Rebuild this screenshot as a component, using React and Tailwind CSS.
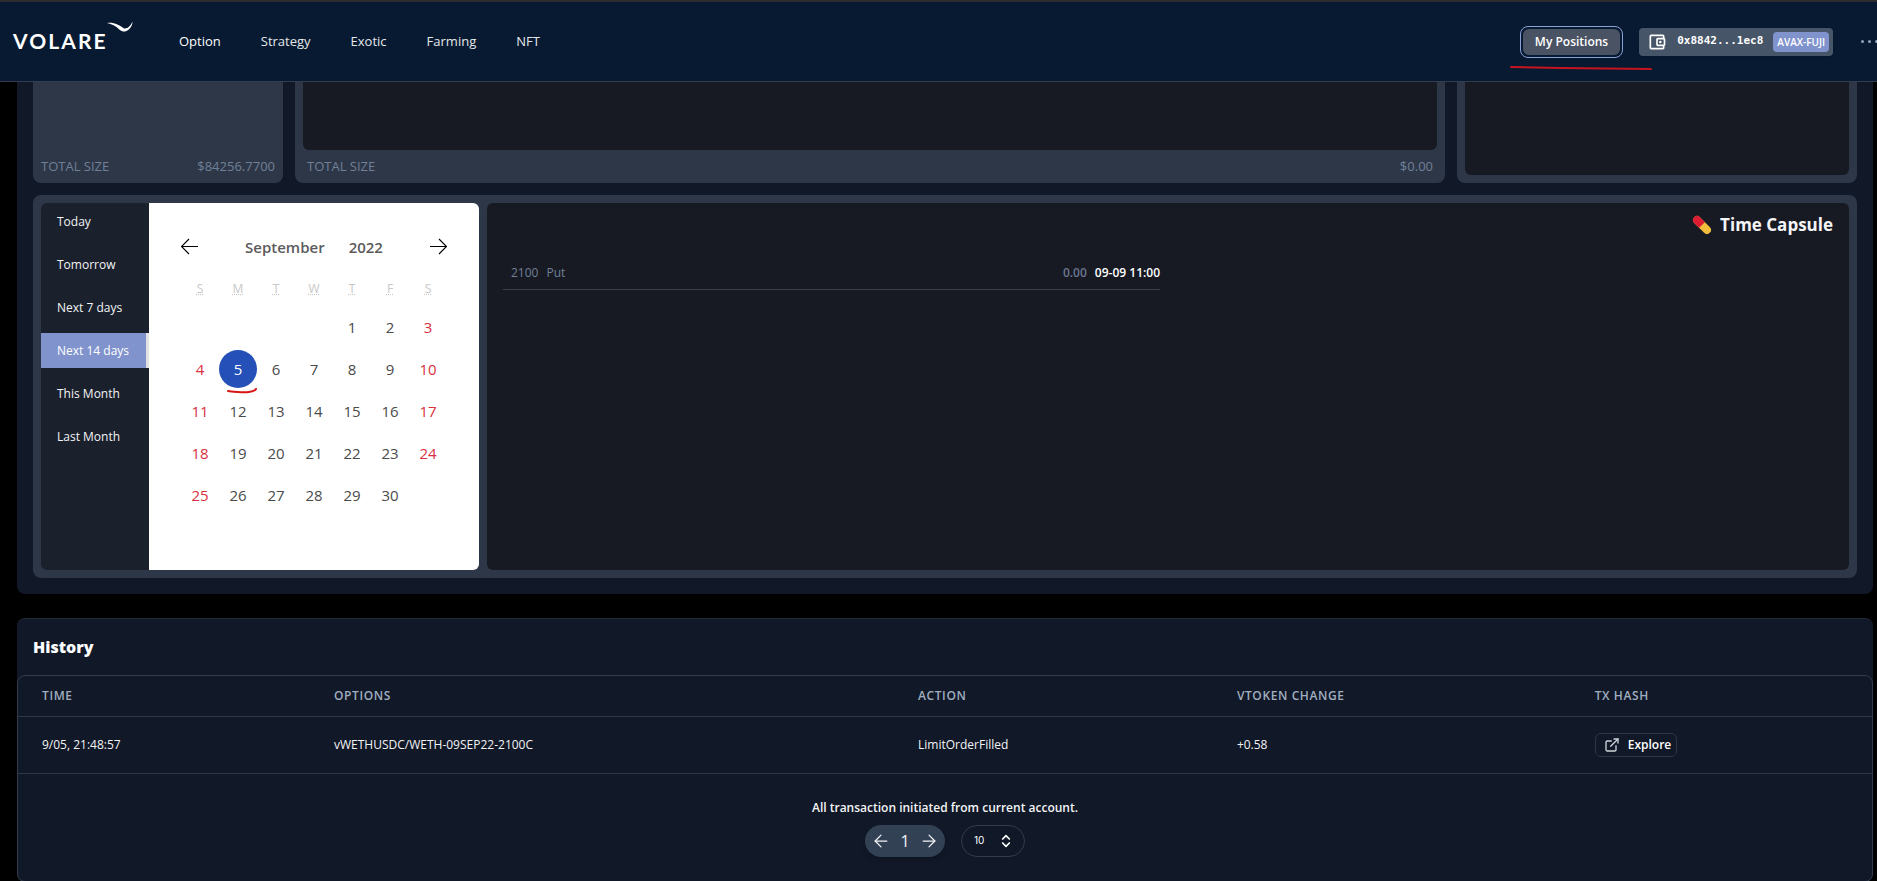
import React, { useState } from 'react';
import { ArrowLeft, ArrowRight, ChevronsUpDown } from 'lucide-react';
import { FiExternalLink } from 'react-icons/fi';
import { MdOutlineAccountBalanceWallet } from 'react-icons/md';

const navLinks = ['Option', 'Strategy', 'Exotic', 'Farming', 'NFT'];
const ranges = ['Today', 'Tomorrow', 'Next 7 days', 'Next 14 days', 'This Month', 'Last Month'];
const weekDays = [
  ['S', 'Sunday'],
  ['M', 'Monday'],
  ['T', 'Tuesday'],
  ['W', 'Wednesday'],
  ['T', 'Thursday'],
  ['F', 'Friday'],
  ['S', 'Saturday'],
];

const history = [
  {
    time: '9/05, 21:48:57',
    option: 'vWETHUSDC/WETH-09SEP22-2100C',
    action: 'LimitOrderFilled',
    change: '+0.58',
  },
];

// September 2022 starts on a Thursday
const weeks = [0, 1, 2, 3, 4].map((w) =>
  [0, 1, 2, 3, 4, 5, 6].map((d) => {
    const day = w * 7 + d - 3;
    return day > 0 && day <= 30 ? day : null;
  })
);

const Logo = () => (
  <a href="#" aria-label="Volare" className="relative block w-32 text-white">
    <span className="font-['Lato'] text-[21px] leading-6 font-bold tracking-widest">VOLARE</span>
    <svg className="absolute -top-2 left-[94px] h-3 w-[26px]" viewBox="0 0 26 12" fill="currentColor">
      <path d="M0 2 C7 1 12 4 17 7.500 C21 8 24 4 25.500 0.500 C25.500 5 22 10 18 10.500 C14 11 12 8 9.500 6 C7 4 4 3 0 2 Z" />
    </svg>
  </a>
);

const Header = () => (
  <header className="relative z-10 flex h-[82px] items-center justify-between overflow-hidden border-t-2 border-b border-t-[#2b2b30] border-b-[#333d4f] bg-[#071a31] pl-[13px]">
    <div className="flex items-center">
      <Logo />
      <nav className="ml-[38px] flex gap-10 text-[13px] text-gray-200">
        {navLinks.map((link) => (
          <a key={link} href="#" className="first:text-white">{link}</a>
        ))}
      </nav>
    </div>
    <div className="flex items-center">
      <div className="relative">
        <button className="block rounded-lg border border-[#8aa0d6] p-0.5">
          <span className="block rounded-md bg-[#4a5364] px-3 py-1 text-xs leading-[18px] font-semibold text-white">My Positions</span>
        </button>
        <svg className="absolute top-10 -left-2.5 h-1 w-[142px]" viewBox="0 0 142 4" fill="none">
          <path d="M1 1 L50 2 L141 3" stroke="#c4141f" strokeWidth="2" strokeLinecap="round" />
        </svg>
      </div>
      <button className="ml-4 flex h-7 items-center rounded bg-[#475569] pr-1 pl-2 text-white shadow">
        <MdOutlineAccountBalanceWallet className="size-5" />
        <span className="mx-2.5 font-['DejaVu_Sans_Mono',monospace] text-[11px] font-bold">0x8842...1ec8</span>
        <span className="rounded bg-[#8093cd] px-1 text-[10px] leading-5 font-semibold">AVAX-FUJI</span>
      </button>
      <button aria-label="More" className="-mr-px ml-7 flex gap-1">
        <i className="size-[3px] rounded-full bg-slate-400" />
        <i className="size-[3px] rounded-full bg-slate-400" />
        <i className="size-[3px] rounded-full bg-slate-400" />
      </button>
    </div>
  </header>
);

const Total = ({ value }) => (
  <div className="flex justify-between text-[13px] leading-[17px] text-[#718096]">
    <span>TOTAL SIZE</span>
    <span>{value}</span>
  </div>
);

const Positions = () => (
  <div className="flex h-[101px] gap-3">
    <div className="flex w-[250px] flex-col justify-end rounded-b-lg bg-[#2d3748] px-2 pb-2">
      <Total value="$84256.7700" />
    </div>
    <div className="flex flex-1 flex-col rounded-b-lg bg-[#2d3748] px-2 pb-2">
      <div className="mb-2 flex-1 rounded-b-md bg-[#171923]" />
      <div className="px-1">
        <Total value="$0.00" />
      </div>
    </div>
    <div className="flex w-[400px] rounded-b-lg bg-[#2d3748] px-2 pb-2">
      <div className="flex-1 rounded-b-md bg-[#171923]" />
    </div>
  </div>
);

const MonthArrow = ({ d }) => (
  <svg className="size-[18px]" viewBox="0 0 18 18" fill="none" stroke="#000" strokeWidth="1.1">
    <path d={d} />
  </svg>
);

const Calendar = () => {
  const [selected, setSelected] = useState(5);

  return (
    <div className="w-[330px] bg-white px-8 pt-7">
      <div className="flex h-8 items-center justify-between text-[15px] font-semibold text-[#5b5b5b]">
        <button aria-label="Previous month"><MonthArrow d="M0 8.500H17M8 1L0.500 8.500L8 16" /></button>
        <div className="flex gap-6">
          <span>September</span>
          <span>2022</span>
        </div>
        <button aria-label="Next month"><MonthArrow d="M1 8.500H18M10 1L17.500 8.500L10 16" /></button>
      </div>
      <table className="mt-2 w-full table-fixed text-center text-[#4a4a4a]">
        <thead>
          <tr className="h-[35px] text-xs text-[#c8c8c8]">
            {weekDays.map(([letter, name]) => (
              <th key={name} className="font-normal"><abbr title={name}>{letter}</abbr></th>
            ))}
          </tr>
        </thead>
        <tbody>
          {weeks.map((week, i) => (
            <tr key={i} className="h-[42px]">
              {week.map((day, j) => (
                <td key={j} className="relative p-0">
                  {day && (
                    <button
                      onClick={() => setSelected(day)}
                      className={
                        day === selected
                          ? 'size-[38px] rounded-full bg-[#2450b8] text-[15px] text-white'
                          : j === 0 || j === 6
                            ? 'size-[38px] text-[15px] text-[#d9303e]'
                            : 'size-[38px] text-[15px]'
                      }
                    >
                      {day}
                    </button>
                  )}
                  {day === 5 && (
                    <svg className="absolute -bottom-1 left-2 h-1.5 w-[30px]" viewBox="0 0 30 6" fill="none">
                      <path d="M1 3 C9 4 16 5 22 4 C26 3.500 28 3 29 1" stroke="#d91414" strokeWidth="2" strokeLinecap="round" />
                    </svg>
                  )}
                </td>
              ))}
            </tr>
          ))}
        </tbody>
      </table>
    </div>
  );
};

const TimeCapsule = () => (
  <div className="flex h-[383px] gap-2 rounded-lg bg-[#2d3748] p-2">
    <div className="flex overflow-hidden rounded-md">
      <div className="flex w-[108px] flex-col gap-2 bg-[#1a202c] pt-px">
        {ranges.map((range) => (
          <button
            key={range}
            className={
              range === 'Next 14 days'
                ? 'h-[35px] border-r-[3px] border-[#e2e2e2] bg-[#8093cd] pl-4 text-left text-xs text-white'
                : 'h-[35px] pl-4 text-left text-xs text-gray-100'
            }
          >
            {range}
          </button>
        ))}
      </div>
      <Calendar />
    </div>
    <div className="flex-1 rounded-md bg-[#171923] px-4 pt-2">
      <h2 className="flex items-center justify-end gap-2 text-[17px] leading-7 font-bold text-gray-100">
        <svg className="size-5" viewBox="0 0 20 20">
          <g transform="rotate(45 10 10)">
            <rect x="-1" y="6" width="22" height="8" rx="4" fill="#f2bd3d" />
            <path d="M10 6H3a4 4 0 0 0 0 8h7z" fill="#dd1c34" />
          </g>
        </svg>
        Time Capsule
      </h2>
      <div className="mt-6 grid grid-cols-2 gap-4">
        <div className="flex justify-between border-b border-[#3d4047] pb-1.5 pl-2 text-xs leading-5">
          <div className="flex gap-2 text-[#718096]">
            <span>2100</span>
            <span>Put</span>
          </div>
          <div className="flex gap-2 font-semibold text-white">
            <span className="text-[#6b7690]">0.00</span>
            <span>09-09 11:00</span>
          </div>
        </div>
      </div>
    </div>
  </div>
);

const Pagination = () => (
  <div className="mt-[7px] flex gap-4">
    <div className="flex h-8 w-20 items-center justify-between rounded-full bg-[#334155] px-1.5 text-gray-100 shadow-md">
      <button aria-label="Previous page"><ArrowLeft size={20} strokeWidth={1.5} /></button>
      <span className="text-base">1</span>
      <button aria-label="Next page"><ArrowRight size={20} strokeWidth={1.5} /></button>
    </div>
    <div className="relative">
      <select
        aria-label="Rows per page"
        defaultValue="10"
        className="h-8 w-16 appearance-none rounded-full border border-[#323c4d] bg-transparent pl-3 font-['Inter'] text-[10px] text-white"
      >
        <option>10</option>
        <option>20</option>
        <option>50</option>
      </select>
      <ChevronsUpDown size={16} strokeWidth={2.5} className="pointer-events-none absolute top-2 right-[11px] text-white" />
    </div>
  </div>
);

const History = () => (
  <section className="mt-6 rounded-lg border-t border-[#1f2937] bg-[#111827]">
    <h2 className="px-4 py-4 text-base font-extrabold text-white">History</h2>
    <div className="rounded-lg border border-[#323c4d]">
      <table className="w-full table-fixed text-left text-xs text-gray-100">
        <thead className="tracking-wider text-[#a0aec0]">
          <tr className="h-10 border-b border-[#2d3748]">
            <th className="w-[15.75%] pl-6 font-semibold">TIME</th>
            <th className="w-[31.5%] pl-6 font-semibold">OPTIONS</th>
            <th className="w-[17.2%] pl-6 font-semibold">ACTION</th>
            <th className="w-[19.3%] pl-6 font-semibold">VTOKEN CHANGE</th>
            <th className="pl-6 font-semibold">TX HASH</th>
          </tr>
        </thead>
        <tbody>
          {history.map((row) => (
            <tr key={row.time} className="h-[57px] border-b border-[#2d3748]">
              <td className="pl-6">{row.time}</td>
              <td className="pl-6">{row.option}</td>
              <td className="pl-6">{row.action}</td>
              <td className="pl-6">{row.change}</td>
              <td className="pl-6">
                <a href="#" className="flex h-6 w-[82px] items-center gap-2 rounded-md border border-[#2d3748] pl-2 font-semibold text-white">
                  <FiExternalLink className="size-4 text-gray-300" />
                  Explore
                </a>
              </td>
            </tr>
          ))}
        </tbody>
      </table>
      <div className="flex flex-col items-center py-6">
        <p className="text-xs leading-5 font-semibold text-gray-100">All transaction initiated from current account.</p>
        <Pagination />
      </div>
    </div>
  </section>
);

const App = () => (
  <div className="min-h-screen bg-black font-['Open_Sans','Noto_Sans',sans-serif]">
    <Header />
    <main className="pr-1 pl-[17px]">
      <section className="flex flex-col gap-3 rounded-b-lg bg-[#111827] px-4 pb-4">
        <Positions />
        <TimeCapsule />
      </section>
      <History />
    </main>
  </div>
);

export default App;
